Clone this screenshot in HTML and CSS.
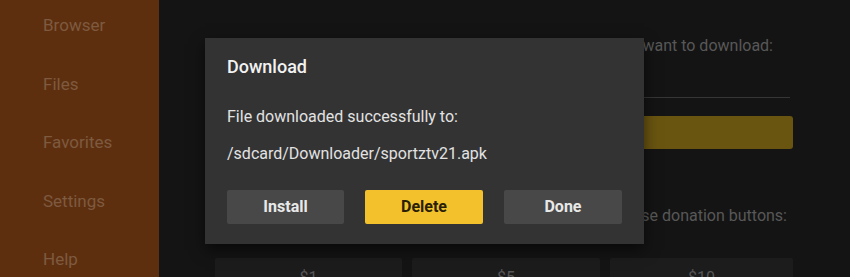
FILE: index.html
```html
<!DOCTYPE html>
<html>
<head>
<meta charset="utf-8">
<link rel="stylesheet" href="styles.css">
</head>
<body>
<aside class="sidebar">
  <div class="nav-item">Browser</div>
  <div class="nav-item">Files</div>
  <div class="nav-item">Favorites</div>
  <div class="nav-item">Settings</div>
  <div class="nav-item">Help</div>
</aside>
<main class="main">
  <p class="prompt">Enter a URL or search term you want to download:</p>
  <div class="url-line"></div>
  <div class="go-bar"></div>
  <p class="donate">If you like this app, please use donation buttons:</p>
  <div class="amounts">
    <div class="amount">$1</div>
    <div class="amount">$5</div>
    <div class="amount">$10</div>
  </div>
  <div class="dialog">
    <div class="dialog-title">Download</div>
    <div class="dialog-text">File downloaded successfully to:</div>
    <div class="dialog-path">/sdcard/Downloader/sportztv21.apk</div>
    <div class="dialog-buttons">
      <div class="btn">Install</div>
      <div class="btn btn-primary">Delete</div>
      <div class="btn">Done</div>
    </div>
  </div>
</main>
</body>
</html>
```
FILE: styles.css
```css
* { box-sizing: border-box; }
html, body { margin: 0; padding: 0; }
body {
  width: 850px;
  height: 277px;
  overflow: hidden;
  display: flex;
  background: #141414;
  font-family: Roboto, "Liberation Sans", sans-serif;
}
.sidebar {
  width: 159px;
  flex: none;
  background: #5e2f0e;
  display: flex;
  flex-direction: column;
  gap: 38.5px;
  padding: 15px 0 0 43px;
}
.nav-item {
  height: 20px;
  line-height: 20px;
  font-size: 17px;
  color: #7d5a40;
}
.main {
  flex: 1;
  position: relative;
  padding: 0 57px 0 56px;
  display: flex;
  flex-direction: column;
}
.main > * { flex-shrink: 0; }
.prompt {
  margin: 36px 20px 0 0;
  height: 20px;
  line-height: 20px;
  font-size: 16px;
  color: #585858;
  white-space: nowrap;
  text-align: right;
}
.url-line {
  margin-top: 41px;
  height: 1px;
  background: #363636;
  margin-right: 3px;
}
.go-bar {
  margin-top: 18px;
  height: 33px;
  background: #6a5510;
  border-radius: 3px;
}
.donate {
  margin: 57px 6px 0 0;
  height: 20px;
  line-height: 20px;
  font-size: 16px;
  color: #585858;
  white-space: nowrap;
  text-align: right;
}
.amounts {
  margin-top: 32px;
  display: grid;
  grid-template-columns: 187px 188px 183px;
  gap: 10px;
}
.amount {
  height: 40px;
  background: #1c1c1c;
  border-radius: 2px;
  color: #555;
  font-size: 16px;
  text-align: center;
  padding-top: 10px;
}
.dialog {
  position: absolute;
  left: 46px;
  top: 38px;
  width: 439px;
  height: 206px;
  background: #333333;
  box-shadow: 0 6px 14px rgba(0, 0, 0, 0.55);
  padding: 19px 21px 20px 22px;
  display: flex;
  flex-direction: column;
}
.dialog > * { flex-shrink: 0; }
.dialog-title {
  height: 20px;
  line-height: 20px;
  font-size: 18px;
  font-weight: 500;
  color: #f2f2f2;
}
.dialog-text {
  margin-top: 30px;
  height: 20px;
  line-height: 20px;
  font-size: 16px;
  color: #e2e2e2;
}
.dialog-path {
  margin-top: 17px;
  height: 20px;
  line-height: 20px;
  font-size: 16px;
  color: #e2e2e2;
}
.dialog-buttons {
  margin-top: 26px;
  display: grid;
  grid-template-columns: 117px 118px 118px;
  gap: 21px;
}
.btn {
  height: 34px;
  line-height: 34px;
  text-align: center;
  background: #484848;
  color: #e8e8e8;
  font-size: 16px;
  font-weight: 700;
  border-radius: 2px;
}
.btn-primary {
  background: #f2c12c;
  color: #2a1e06;
}
```
